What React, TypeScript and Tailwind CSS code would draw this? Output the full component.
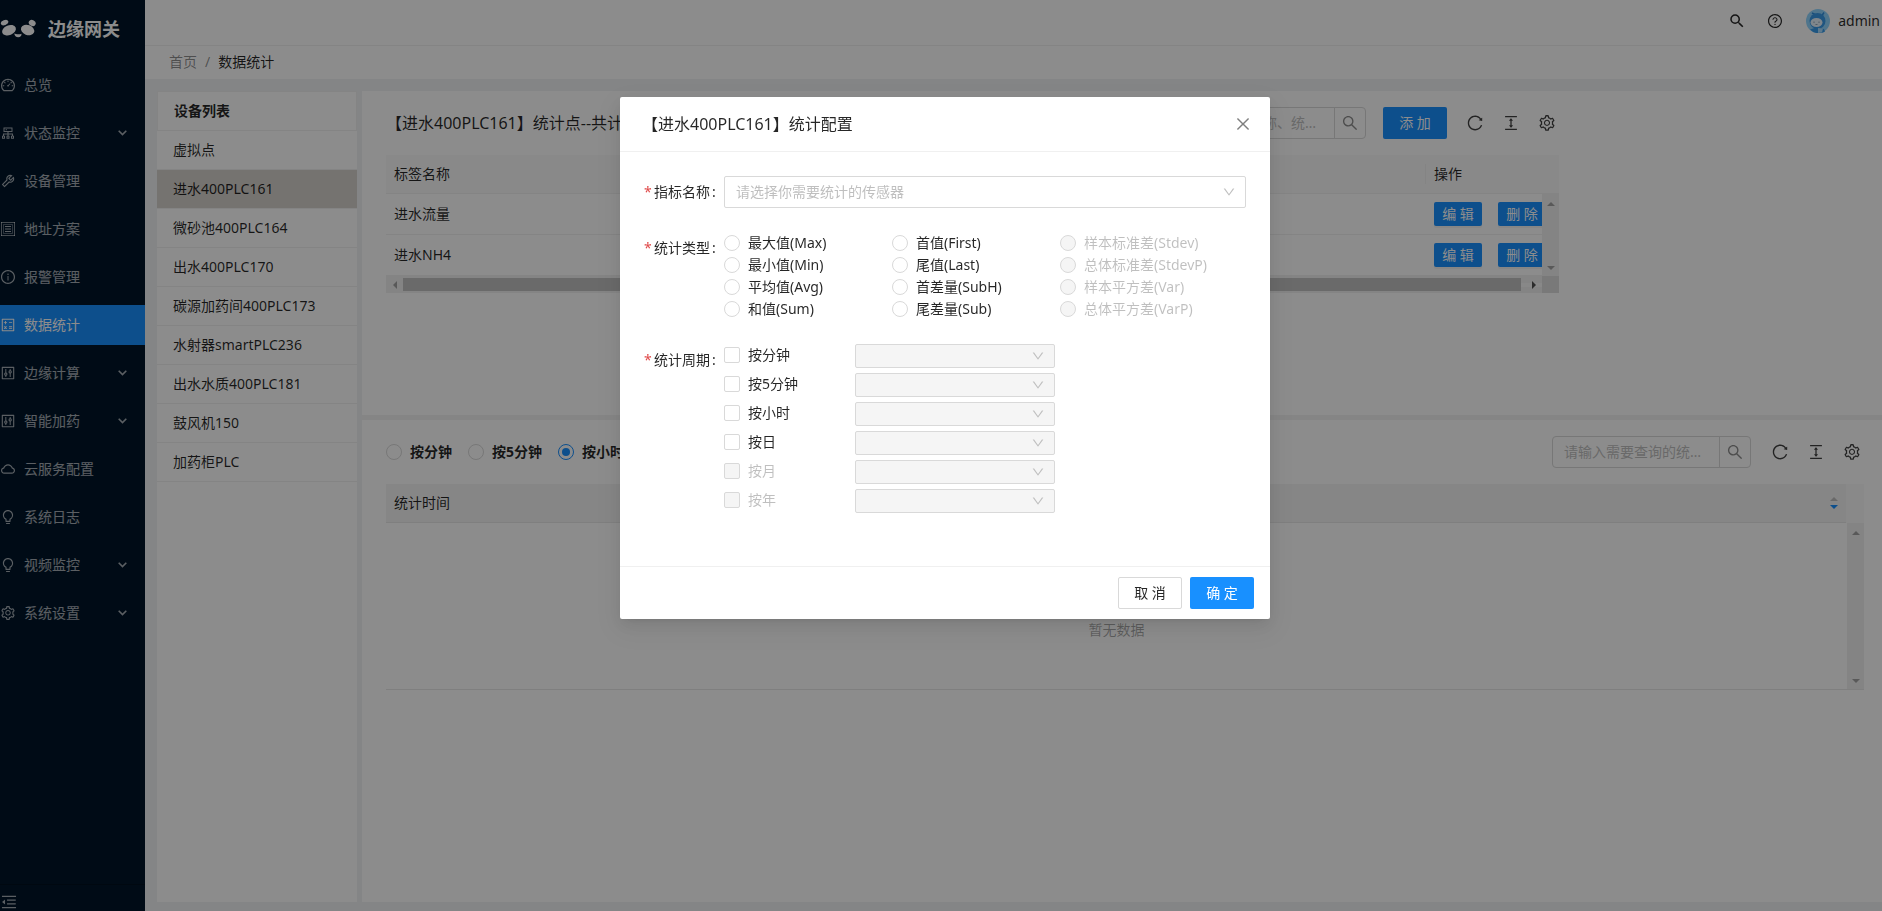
// core
import { ReactNode } from 'react'
// libraries
import clsx from 'clsx'
import {
  AiOutlineBulb,
  AiOutlineCalculator,
  AiOutlineClose,
  AiOutlineCloud,
  AiOutlineCluster,
  AiOutlineColumnHeight,
  AiOutlineControl,
  AiOutlineDashboard,
  AiOutlineDown,
  AiOutlineInfoCircle,
  AiOutlineMenuFold,
  AiOutlineQuestionCircle,
  AiOutlineReload,
  AiOutlineSearch,
  AiOutlineSetting,
  AiOutlineTool,
} from 'react-icons/ai'
import { MdSearch } from 'react-icons/md'

interface IMenuItem {
  label: string
  icon: ReactNode
  hasChildren?: boolean
  active?: boolean
}

interface IOption {
  label: string
  disabled?: boolean
}

const SchemeIcon = () => (
  <svg width="14" height="14" viewBox="0 0 14 14" fill="none" stroke="currentColor">
    <path d="M0 .5h14M0 13.5h14M.5 0v14M13.5 0v14" strokeOpacity=".75" />
    <path d="M2.5 2.5h9v9h-9z" strokeOpacity=".5" />
    <path d="M4 4.5h6M4 7h6M4 9.5h6" />
  </svg>
)

const MENU: IMenuItem[] = [
  { label: '总览', icon: <AiOutlineDashboard /> },
  { label: '状态监控', icon: <AiOutlineCluster />, hasChildren: true },
  { label: '设备管理', icon: <AiOutlineTool /> },
  { label: '地址方案', icon: <SchemeIcon /> },
  { label: '报警管理', icon: <AiOutlineInfoCircle /> },
  { label: '数据统计', icon: <AiOutlineCalculator />, active: true },
  { label: '边缘计算', icon: <AiOutlineControl />, hasChildren: true },
  { label: '智能加药', icon: <AiOutlineControl />, hasChildren: true },
  { label: '云服务配置', icon: <AiOutlineCloud /> },
  { label: '系统日志', icon: <AiOutlineBulb /> },
  { label: '视频监控', icon: <AiOutlineBulb />, hasChildren: true },
  { label: '系统设置', icon: <AiOutlineSetting />, hasChildren: true },
]

const DEVICES = [
  '虚拟点',
  '进水400PLC161',
  '微砂池400PLC164',
  '出水400PLC170',
  '碳源加药间400PLC173',
  '水射器smartPLC236',
  '出水水质400PLC181',
  '鼓风机150',
  '加药柜PLC',
]

const TAGS = ['进水流量', '进水NH4']

const STAT_TYPES: IOption[] = [
  { label: '最大值(Max)' },
  { label: '首值(First)' },
  { label: '样本标准差(Stdev)', disabled: true },
  { label: '最小值(Min)' },
  { label: '尾值(Last)' },
  { label: '总体标准差(StdevP)', disabled: true },
  { label: '平均值(Avg)' },
  { label: '首差量(SubH)' },
  { label: '样本平方差(Var)', disabled: true },
  { label: '和值(Sum)' },
  { label: '尾差量(Sub)' },
  { label: '总体平方差(VarP)', disabled: true },
]

const PERIODS: IOption[] = [
  { label: '按分钟' },
  { label: '按5分钟' },
  { label: '按小时' },
  { label: '按日' },
  { label: '按月', disabled: true },
  { label: '按年', disabled: true },
]

const Triangle = ({ className }: { className?: string }) => (
  <svg width="8" height="4" viewBox="0 0 8 4" fill="currentColor" className={className}>
    <path d="M4 0l4 4H0z" />
  </svg>
)

const VerticalScrollbar = () => (
  <div className="flex w-[17px] shrink-0 flex-col items-center justify-between bg-[#f1f1f1] pt-2 pb-1.5 text-[#a3a3a3]">
    <Triangle />
    <Triangle className="rotate-180" />
  </div>
)

const Logo = () => (
  <svg width="36" height="20" viewBox="0 0 36 20" fill="#fff" className="shrink-0">
    <ellipse cx="4.6" cy="3.6" rx="3.9" ry="2.5" transform="rotate(-20 4.6 3.6)" />
    <ellipse cx="9" cy="11.2" rx="7.2" ry="4.9" transform="rotate(-22 9 11.2)" />
    <ellipse cx="32.2" cy="4" rx="3.6" ry="3" transform="rotate(30 32.2 4)" />
    <ellipse cx="27.6" cy="11" rx="6.9" ry="5" transform="rotate(22 27.6 11)" />
    <path d="M14.3 14.6c1.6.9 5.6.9 7.2.2.2 2-1.2 3.5-3.3 3.5s-3.8-1.5-3.9-3.7z" />
  </svg>
)

const Avatar = () => (
  <svg width="24" height="24" viewBox="0 0 24 24">
    <circle cx="12" cy="12" r="12" fill="#91d5ff" />
    <path d="M6 4l4 2M18 3.5l-2 3" stroke="#2f8fe0" strokeWidth="1.5" />
    <circle cx="11.5" cy="12" r="8" fill="#3a9bea" />
    <path d="M4 20.5l6-2 8 1.5 1 2.5A12 12 0 0 1 4 20.5z" fill="#3a9bea" />
    <path d="M12 19l5 .5-1 4-4 .5z" fill="#a9dcff" />
    <ellipse cx="10.5" cy="13.5" rx="6" ry="4.6" fill="#e8f4fd" />
    <path d="M8 12.5v1.5M13 12.5v1.5M9.5 15.5h2" stroke="#7a93a8" strokeWidth=".8" />
  </svg>
)

const Sidebar = () => (
  <aside className="flex w-[145px] shrink-0 flex-col bg-[#001529] text-white/65">
    <div className="flex h-[58px] items-center gap-3 text-white">
      <Logo />
      <h1 className="text-lg font-bold">边缘网关</h1>
    </div>
    <nav className="flex flex-1 flex-col gap-2 pt-[7px]">
      {MENU.map((item) => (
        <a
          key={item.label}
          href="#"
          className={clsx(
            'flex h-10 items-center pr-[18px]',
            item.active && 'bg-[#1890ff] text-white'
          )}>
          <span className="mr-2 flex w-4 justify-center text-base">{item.icon}</span>
          <span className="flex-1">{item.label}</span>
          {item.hasChildren && (
            <svg width="9" height="6" viewBox="0 0 9 6" fill="none" stroke="currentColor">
              <path d="M.7.7l3.8 3.8L8.3.7" strokeWidth="1.6" />
            </svg>
          )}
        </a>
      ))}
    </nav>
    <button
      type="button"
      aria-label="menu"
      className="flex h-[27px] items-end border-t border-black/25 text-lg">
      <AiOutlineMenuFold />
    </button>
  </aside>
)

const TopBar = () => (
  <header className="flex h-[46px] shrink-0 items-center justify-end border-b border-[#f0f0f0] bg-white pr-0.5 pb-1">
    <button type="button" aria-label="search" className="mr-[21px] text-lg">
      <MdSearch />
    </button>
    <button type="button" aria-label="help" className="mr-[23px] text-base">
      <AiOutlineQuestionCircle />
    </button>
    <Avatar />
    <span className="ml-2">admin</span>
  </header>
)

const SearchBox = ({ id, placeholder }: { id: string; placeholder: string }) => (
  <div className="flex h-8 w-[199px]">
    <input
      id={id}
      type="text"
      aria-label={placeholder}
      placeholder={placeholder}
      className="min-w-0 flex-1 rounded-l-sm border border-[#d9d9d9] px-[11px] text-ellipsis placeholder:text-[#bfbfbf]"
    />
    <button
      type="button"
      aria-label="search"
      className="-ml-px flex w-8 items-center justify-center rounded-r-sm border border-[#d9d9d9] text-lg text-black/45">
      <AiOutlineSearch />
    </button>
  </div>
)

const TableTools = () => (
  <div className="flex gap-[18px] text-lg text-black/75">
    <button type="button" aria-label="reload">
      <AiOutlineReload />
    </button>
    <button type="button" aria-label="density">
      <AiOutlineColumnHeight />
    </button>
    <button type="button" aria-label="setting">
      <AiOutlineSetting />
    </button>
  </div>
)

const SmallButton = ({ children }: { children: ReactNode }) => (
  <button
    type="button"
    className="h-6 w-12 shrink-0 rounded-xs bg-[#1890ff] whitespace-pre text-white shadow-[0_2px_0_rgba(0,0,0,0.045)]">
    {children}
  </button>
)

const DeviceList = () => (
  <section className="w-[200px] shrink-0 bg-white">
    <h2 className="h-10 border border-[#f0f0f0] pl-4 leading-[38px] font-bold">设备列表</h2>
    <ul>
      {DEVICES.map((device) => (
        <li
          key={device}
          className={clsx(
            'h-[39px] border-b border-[#f0f0f0] pl-4 leading-[38px]',
            device === '进水400PLC161' && 'bg-[#d5d1cc]'
          )}>
          {device}
        </li>
      ))}
    </ul>
  </section>
)

const TagPanel = () => (
  <section className="h-[324px] shrink-0 bg-white">
    <div className="w-4/5 pt-4 pr-[19px] pl-6">
      <div className="flex h-8 items-center">
        <h2 className="flex-1 text-base">【进水400PLC161】统计点--共计2条</h2>
        <SearchBox id="tagSearch" placeholder="请输入标签名称、统计名称" />
        <button
          type="button"
          className="mr-[19px] ml-[17px] h-8 w-16 rounded-xs bg-[#1890ff] whitespace-pre text-white">
          添 加
        </button>
        <div className="pr-[3px]">
          <TableTools />
        </div>
      </div>

      <div className="mt-4">
        <table className="w-full table-fixed bg-[#fafafa] text-left">
          <thead>
            <tr className="h-[38px] border-b border-[#f0f0f0]">
              <th className="pl-2 font-normal">标签名称</th>
              <th className="w-[134px] font-normal">
                <span className="block border-l border-[#f0f0f0] pl-2">操作</span>
              </th>
            </tr>
          </thead>
        </table>
        <div className="flex">
          <div className="min-w-0 flex-1 overflow-hidden">
            <table className="w-full table-fixed text-left">
              <tbody>
                {TAGS.map((tag) => (
                  <tr key={tag} className="h-[41px] border-b border-[#f0f0f0]">
                    <td className="pl-2">{tag}</td>
                    <td className="w-[117px] pl-[9px]">
                      <div className="flex gap-4">
                        <SmallButton>编 辑</SmallButton>
                        <SmallButton>删 除</SmallButton>
                      </div>
                    </td>
                  </tr>
                ))}
              </tbody>
            </table>
          </div>
          <VerticalScrollbar />
        </div>
        <div className="flex h-[17px] items-center bg-[#f1f1f1]">
          <span className="flex w-[17px] justify-center text-[#a3a3a3]">
            <Triangle className="-rotate-90" />
          </span>
          <div className="h-[13px] flex-1 bg-[#c1c1c1]" />
          <span className="flex w-[21px] justify-end bg-[#f8f8f8] pr-1 text-[#505050]">
            <Triangle className="rotate-90" />
          </span>
          <span className="h-full w-[17px] bg-[#dcdcdc]" />
        </div>
      </div>
    </div>
  </section>
)

const HistoryPanel = () => (
  <section className="flex-1 bg-white pt-4 pr-[18px] pl-6">
    <div className="flex h-8 items-center">
      <div className="flex flex-1 gap-4 font-bold">
        {['按分钟', '按5分钟', '按小时', '按日'].map((label) => (
          <label key={label} className="flex items-center gap-2">
            <input
              type="radio"
              name="historyPeriod"
              defaultChecked={label === '按小时'}
              className="size-4 appearance-none rounded-full border border-[#d9d9d9] bg-white checked:border-[#1890ff] checked:bg-[#1890ff] checked:bg-clip-content checked:p-[3px]"
            />
            {label}
          </label>
        ))}
      </div>
      <SearchBox id="historySearch" placeholder="请输入需要查询的统计时间" />
      <div className="pr-[3px] pl-5">
        <TableTools />
      </div>
    </div>

    <div className="mt-4">
      <div className="flex">
        <table className="flex-1 text-left">
          <thead className="block bg-[#f4f4f4]">
            <tr className="flex h-[39px] items-center border-b border-[#e8e8e8]">
              <th className="flex-1 pl-2 font-normal">统计时间</th>
              <th className="flex flex-col gap-1 pr-2" aria-label="sort">
                <Triangle className="text-[#bfbfbf]" />
                <Triangle className="rotate-180 text-[#1890ff]" />
              </th>
            </tr>
          </thead>
        </table>
        <div className="w-[18px] bg-[#fafafa]" />
      </div>
      <div className="flex h-[167px] border-b border-[#e8e8e8]">
        <p className="flex flex-1 items-end justify-center pb-[49px] text-black/35">暂无数据</p>
        <VerticalScrollbar />
      </div>
    </div>
  </section>
)

const FieldLabel = ({ children, htmlFor }: { children: ReactNode; htmlFor?: string }) => (
  <label htmlFor={htmlFor} className="flex h-8 w-20 shrink-0 items-center">
    <span className="w-2.5 text-[#e04a4a]">*</span>
    {children}
    <span className="ml-0.5">:</span>
  </label>
)

const StatModal = () => (
  <div className="fixed inset-0 z-10 flex items-start justify-center bg-black/45 pt-[97px] pl-2">
    <div
      role="dialog"
      aria-labelledby="modalTitle"
      className="w-[650px] rounded-xs bg-white shadow-[0_3px_6px_-4px_rgba(0,0,0,0.12),0_6px_16px_rgba(0,0,0,0.08),0_9px_28px_8px_rgba(0,0,0,0.05)]">
      <div className="flex items-center justify-between border-b border-[#f0f0f0] py-4 pr-[18px] pl-[22px]">
        <h2 id="modalTitle" className="text-base leading-[22px]">
          【进水400PLC161】统计配置
        </h2>
        <button type="button" aria-label="close" className="text-lg text-black/50">
          <AiOutlineClose />
        </button>
      </div>

      <form className="flex flex-col gap-6 px-6 pt-6 pb-[53px]">
        <div className="flex">
          <FieldLabel htmlFor="sensor">指标名称</FieldLabel>
          <div className="relative flex-1">
            <select
              id="sensor"
              className="h-8 w-full appearance-none rounded-xs border border-[#d9d9d9] px-[11px] text-[#bfbfbf]">
              <option>请选择你需要统计的传感器</option>
            </select>
            <AiOutlineDown className="pointer-events-none absolute top-[9px] right-2.5 text-sm text-[#bfbfbf]" />
          </div>
        </div>

        <div className="flex" role="radiogroup" aria-label="统计类型">
          <FieldLabel>统计类型</FieldLabel>
          <div className="grid grid-cols-[repeat(3,168px)]">
            {STAT_TYPES.map((item) => (
              <label
                key={item.label}
                className={clsx('flex h-[22px] items-center gap-2', item.disabled && 'text-black/25')}>
                <input
                  type="radio"
                  name="statType"
                  disabled={item.disabled}
                  className="size-4 appearance-none rounded-full border border-[#d9d9d9] bg-white disabled:bg-[#f5f5f5]"
                />
                {item.label}
              </label>
            ))}
          </div>
        </div>

        <div className="flex" role="group" aria-label="统计周期">
          <FieldLabel>统计周期</FieldLabel>
          <div className="flex flex-col gap-[5px]">
            {PERIODS.map((item) => (
              <div key={item.label} className="flex h-6 items-center">
                <label
                  className={clsx(
                    'flex w-[131px] items-center gap-2 pb-0.5',
                    item.disabled && 'text-black/25'
                  )}>
                  <input
                    type="checkbox"
                    disabled={item.disabled}
                    className="size-4 appearance-none rounded-xs border border-[#d9d9d9] bg-white disabled:bg-[#f5f5f5]"
                  />
                  {item.label}
                </label>
                <div className="relative w-[200px]">
                  <select
                    disabled
                    aria-label={item.label}
                    className="block h-6 w-full appearance-none rounded-xs border border-[#d9d9d9] bg-[#f5f5f5]"
                  />
                  <AiOutlineDown className="pointer-events-none absolute top-[5px] right-2.5 text-sm text-[#bfbfbf]" />
                </div>
              </div>
            ))}
          </div>
        </div>
      </form>

      <div className="flex justify-end gap-2 border-t border-[#f0f0f0] px-4 py-2.5">
        <button
          type="button"
          className="h-8 w-16 rounded-xs border border-[#d9d9d9] whitespace-pre">
          取 消
        </button>
        <button type="button" className="h-8 w-16 rounded-xs bg-[#1890ff] whitespace-pre text-white">
          确 定
        </button>
      </div>
    </div>
  </div>
)

export default function App() {
  return (
    <div className="flex h-screen overflow-hidden bg-[#f0f2f5] font-['Noto_Sans','Noto_Sans_CJK_SC',sans-serif] text-sm text-black/85">
      <Sidebar />
      <div className="flex min-w-0 flex-1 flex-col">
        <TopBar />
        <div className="flex h-[33px] shrink-0 items-center gap-2 bg-white pb-0.5 pl-6">
          <a href="#" className="text-black/45">
            首页
          </a>
          <span className="text-black/45">/</span>
          <span>数据统计</span>
        </div>
        <main className="flex min-h-0 flex-1 gap-[5px] pt-3 pb-[9px] pl-3">
          <DeviceList />
          <div className="flex min-w-0 flex-1 flex-col gap-[5px] bg-[#f3f3f3]">
            <TagPanel />
            <HistoryPanel />
          </div>
        </main>
      </div>
      <StatModal />
    </div>
  )
}
